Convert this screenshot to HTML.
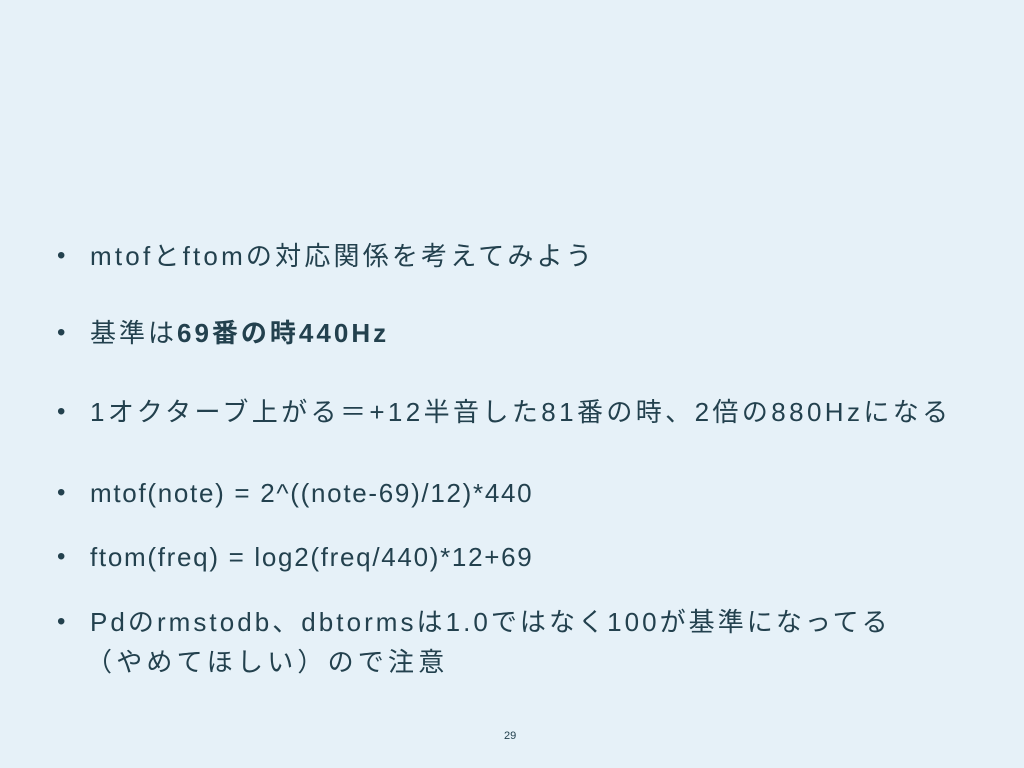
<!DOCTYPE html>
<html><head><meta charset="utf-8"><style>
body{margin:0;width:1024px;height:768px;background:#e6f1f8;overflow:hidden;position:relative;font-family:"Liberation Sans","Noto Sans CJK JP",sans-serif;color:#23414e;}
.l{position:absolute;left:90px;font-size:26px;line-height:30px;white-space:nowrap;}
.b{position:absolute;left:57px;font-size:24px;line-height:30px;}
.pn{position:absolute;left:504px;top:730px;font-size:11px;}
</style></head><body>
<div class="b" style="top:241px">•</div><div class="l" style="top:241px;letter-spacing:3.2px">mtofとftomの対応関係を考えてみよう</div>
<div class="b" style="top:318px">•</div><div class="l" style="top:318px;letter-spacing:3px">基準は<b>69番の時440Hz</b></div>
<div class="b" style="top:397px">•</div><div class="l" style="top:397px;letter-spacing:3.4px">1オクターブ上がる＝+12半音した81番の時、2倍の880Hzになる</div>
<div class="b" style="top:478px">•</div><div class="l" style="top:478px;letter-spacing:1.7px">mtof(note) = 2^((note-69)/12)*440</div>
<div class="b" style="top:542px">•</div><div class="l" style="top:542px;letter-spacing:1.7px">ftom(freq) = log2(freq/440)*12+69</div>
<div class="b" style="top:607px">•</div><div class="l" style="top:607px;letter-spacing:3.05px">Pdのrmstodb、dbtormsは1.0ではなく100が基準になってる</div>
<div class="l" style="top:647px;left:86px;letter-spacing:4.2px">（やめてほしい）ので注意</div>
<div class="pn">29</div>
</body></html>
